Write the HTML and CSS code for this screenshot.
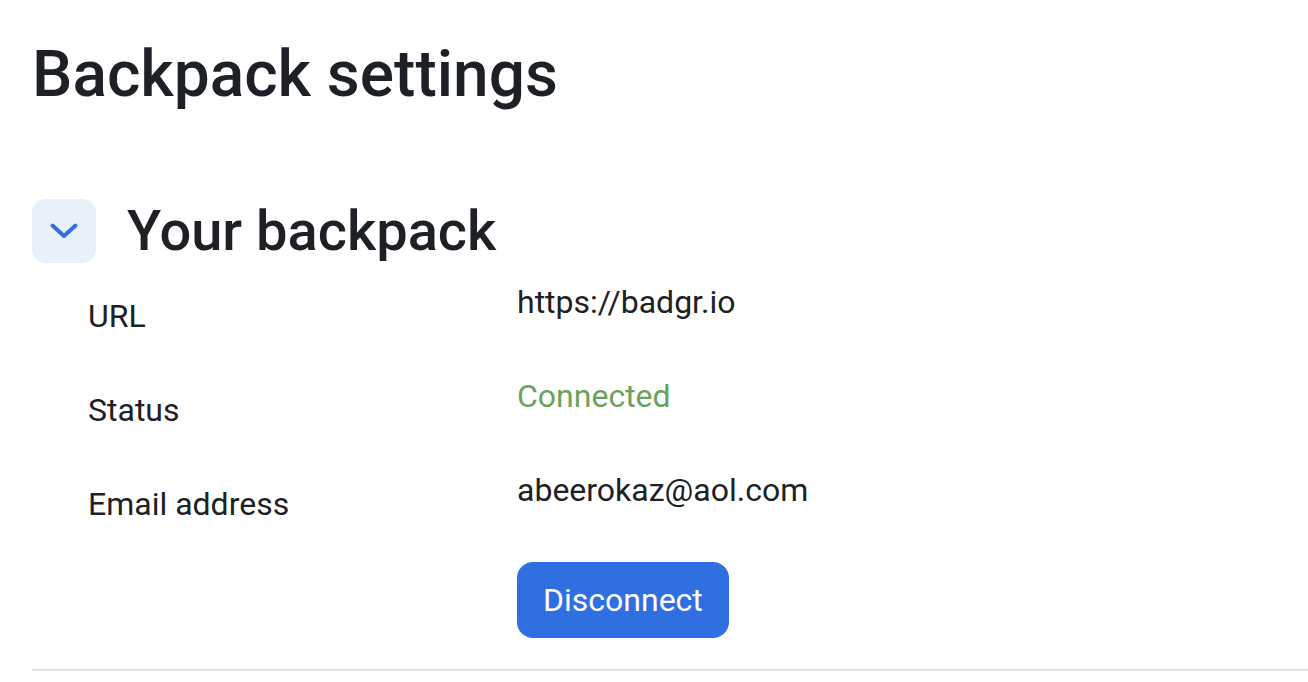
FILE: index.html
```html
<!DOCTYPE html>
<html lang="en">
<head>
<meta charset="utf-8">
<title>Backpack settings</title>
<link rel="stylesheet" href="styles.css">
</head>
<body>
<main class="page">
  <h1 class="page-title">Backpack settings</h1>

  <section class="panel">
    <header class="panel-head">
      <button class="toggle" type="button" aria-expanded="true" aria-label="Collapse">
        <svg width="28" height="16" viewBox="0 0 28 16" aria-hidden="true">
          <path d="M2.5 2.5 L14 13 L25.5 2.5" fill="none" stroke="#3171df" stroke-width="4" stroke-linecap="round" stroke-linejoin="round"/>
        </svg>
      </button>
      <h2 class="panel-title">Your backpack</h2>
    </header>

    <dl class="details">
      <dt>URL</dt>
      <dd>https://badgr.io</dd>
      <dt>Status</dt>
      <dd class="ok">Connected</dd>
      <dt>Email address</dt>
      <dd>abeerokaz@aol.com</dd>
      <dt class="empty"></dt>
      <dd><button class="btn-primary" type="button">Disconnect</button></dd>
    </dl>
  </section>

  <hr class="rule">
</main>
</body>
</html>
```

FILE: styles.css
```css
html, body {
  margin: 0;
  padding: 0;
  background: #fff;
}

body {
  font-family: Roboto, "Liberation Sans", sans-serif;
  color: #1d2125;
  font-size: 32px;
  line-height: 1.5;
}

.page {
  padding: 37px 0 0 32px;
}

.page-title {
  margin: 0 0 84px;
  font-size: 64px;
  font-weight: 500;
  line-height: 1.2;
}

.panel-head {
  display: flex;
  align-items: center;
  gap: 31px;
}

.toggle {
  width: 64px;
  height: 64px;
  margin-top: -1px;
  border: 0;
  border-radius: 14px;
  background: #e9f0fc;
  padding: 0;
  display: flex;
  align-items: center;
  justify-content: center;
  flex: none;
}

.panel-title {
  margin: 0;
  font-size: 56px;
  font-weight: 500;
  line-height: 1.2;
}

.details {
  margin: 13px 0 0;
  padding-left: 56px;
  display: grid;
  grid-template-columns: 429px 1fr;
  row-gap: 32px;
}

.details dt {
  padding-top: 14px;
  margin: 0;
}

.details dd {
  margin: 0;
}

.details .ok {
  color: #6ba25a;
}

.btn-primary {
  margin-top: 2px;
  font: inherit;
  color: #fff;
  background: #306fdf;
  border: 0;
  border-radius: 16px;
  padding: 14px 26px;
  line-height: 48px;
}

.rule {
  margin: 31px 0 0;
  border: 0;
  border-top: 2px solid #dee2e6;
}
```
